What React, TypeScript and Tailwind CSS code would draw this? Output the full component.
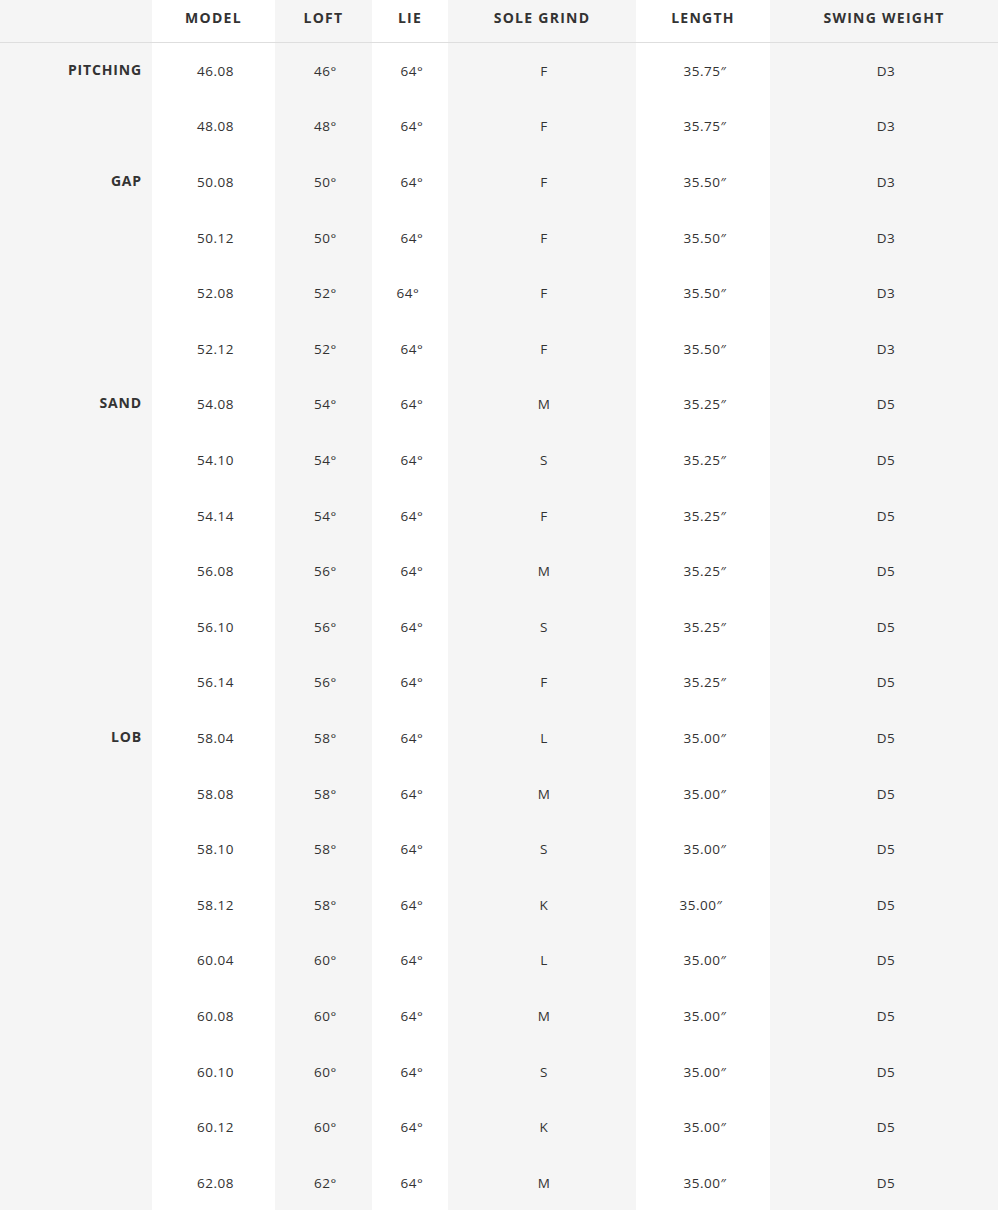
const columns = [
  { key: "label", title: "", bg: "bg-[#f5f5f5]" },
  { key: "model", title: "Model", bg: "bg-white" },
  { key: "loft", title: "Loft", bg: "bg-[#f5f5f5]" },
  { key: "lie", title: "Lie", bg: "bg-white" },
  { key: "sole", title: "Sole Grind", bg: "bg-[#f5f5f5]" },
  { key: "length", title: "Length", bg: "bg-white" },
  { key: "swing", title: "Swing Weight", bg: "bg-[#f5f5f5]" },
];

type Row = {
  label?: string;
  model: string;
  loft: string;
  sole: string;
  length: string;
  swing: string;
  lieShift?: boolean;
  lengthShift?: boolean;
};

const rows: Row[] = [
  { label: "Pitching", model: "46.08", loft: "46", sole: "F", length: "35.75", swing: "D3" },
  { model: "48.08", loft: "48", sole: "F", length: "35.75", swing: "D3" },
  { label: "Gap", model: "50.08", loft: "50", sole: "F", length: "35.50", swing: "D3" },
  { model: "50.12", loft: "50", sole: "F", length: "35.50", swing: "D3" },
  { model: "52.08", loft: "52", sole: "F", length: "35.50", swing: "D3", lieShift: true },
  { model: "52.12", loft: "52", sole: "F", length: "35.50", swing: "D3" },
  { label: "Sand", model: "54.08", loft: "54", sole: "M", length: "35.25", swing: "D5" },
  { model: "54.10", loft: "54", sole: "S", length: "35.25", swing: "D5" },
  { model: "54.14", loft: "54", sole: "F", length: "35.25", swing: "D5" },
  { model: "56.08", loft: "56", sole: "M", length: "35.25", swing: "D5" },
  { model: "56.10", loft: "56", sole: "S", length: "35.25", swing: "D5" },
  { model: "56.14", loft: "56", sole: "F", length: "35.25", swing: "D5" },
  { label: "Lob", model: "58.04", loft: "58", sole: "L", length: "35.00", swing: "D5" },
  { model: "58.08", loft: "58", sole: "M", length: "35.00", swing: "D5" },
  { model: "58.10", loft: "58", sole: "S", length: "35.00", swing: "D5" },
  { model: "58.12", loft: "58", sole: "K", length: "35.00", swing: "D5", lengthShift: true },
  { model: "60.04", loft: "60", sole: "L", length: "35.00", swing: "D5" },
  { model: "60.08", loft: "60", sole: "M", length: "35.00", swing: "D5" },
  { model: "60.10", loft: "60", sole: "S", length: "35.00", swing: "D5" },
  { model: "60.12", loft: "60", sole: "K", length: "35.00", swing: "D5" },
  { model: "62.08", loft: "62", sole: "M", length: "35.00", swing: "D5" },
];

function cellValue(row: Row, key: string) {
  switch (key) {
    case "model":
      return row.model;
    case "loft":
      return `${row.loft}°`;
    case "lie":
      return "64°";
    case "sole":
      return row.sole;
    case "length":
      return `${row.length}″`;
    default:
      return row.swing;
  }
}

export default function App() {
  return (
    <div
      className="min-h-[1210px] w-[998px] bg-[#f5f5f5] text-[#333]"
      style={{ fontFamily: '"Open Sans", "Liberation Sans", sans-serif' }}
    >
      <div className="grid grid-cols-[152px_123px_97px_76px_188px_134px_228px]">
        {columns.map((col) => (
          <div
            key={col.key}
            className={`${col.bg} flex h-[43px] items-center justify-center border-b border-[#dedede] pb-[8px] text-[14px] font-bold uppercase tracking-[0.09em]`}
          >
            {col.title}
          </div>
        ))}

        {rows.map((row) =>
          columns.map((col) =>
            col.key === "label" ? (
              <div
                key={row.model + col.key}
                className={`${col.bg} flex h-[55.62px] items-center justify-end pr-[10px] pb-[3px] text-[14px] font-bold uppercase tracking-[0.06em]`}
              >
                {row.label}
              </div>
            ) : (
              <div
                key={row.model + col.key}
                className={`${col.bg} flex h-[55.62px] items-center justify-center pl-1 text-[13.5px] tracking-[0.04em]`}
              >
                <span
                  className={
                    (col.key === "lie" && row.lieShift) ||
                    (col.key === "length" && row.lengthShift)
                      ? "-ml-2"
                      : ""
                  }
                >
                  {cellValue(row, col.key)}
                </span>
              </div>
            )
          )
        )}
      </div>
    </div>
  );
}
